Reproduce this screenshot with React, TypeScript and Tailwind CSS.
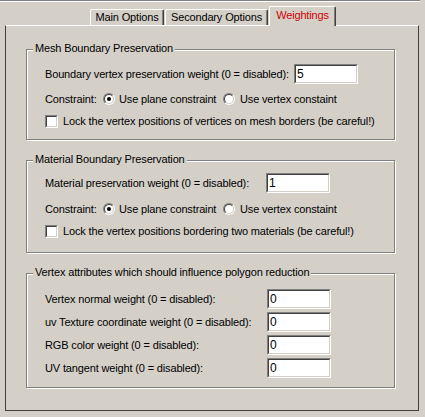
import React from "react";

const font = { fontFamily: '"Liberation Sans", Arial, sans-serif' };

function Radio({ checked }: { checked?: boolean }) {
  return (
    <div className="w-[12px] h-[12px] rounded-full border border-t-[#808080] border-l-[#808080] border-r-white border-b-white shrink-0">
      <div className="w-full h-full rounded-full border border-t-[#404040] border-l-[#404040] border-r-[#d4d0c8] border-b-[#d4d0c8] bg-white flex items-center justify-center">
        {checked && <div className="w-[4px] h-[4px] rounded-full bg-black" />}
      </div>
    </div>
  );
}

function Checkbox() {
  return (
    <div className="w-[13px] h-[13px] border border-t-[#808080] border-l-[#808080] border-r-white border-b-white shrink-0">
      <div className="w-full h-full border border-t-[#404040] border-l-[#404040] border-r-[#d4d0c8] border-b-[#d4d0c8] bg-white" />
    </div>
  );
}

function Input({ value }: { value: string }) {
  return (
    <div className="w-[64px] h-[20px] border border-t-[#808080] border-l-[#808080] border-r-white border-b-white shrink-0">
      <div className="w-full h-full border border-t-[#404040] border-l-[#404040] border-r-[#d4d0c8] border-b-[#d4d0c8] bg-white flex items-center pl-[1px] text-[12px] leading-[14px]">
        {value}
      </div>
    </div>
  );
}

function Group({
  title,
  className,
  children,
}: {
  title: string;
  className: string;
  children: React.ReactNode;
}) {
  return (
    <div
      className={
        "relative w-[369px] border border-[#808080] shadow-[inset_1px_1px_0_#ffffff,1px_1px_0_#ffffff] pl-[18px] " +
        className
      }
    >
      <span className="absolute left-[6px] -top-[8px] px-[2px] bg-[#d4d0c8] leading-[13px]">
        {title}
      </span>
      {children}
    </div>
  );
}

function ConstraintRow({ className }: { className: string }) {
  return (
    <div className={"flex items-center h-[16px] " + className}>
      <span className="w-[58px]">Constraint:</span>
      <div className="flex items-center gap-[4px] w-[120px]">
        <Radio checked />
        <span>Use plane constraint</span>
      </div>
      <div className="flex items-center gap-[5px]">
        <Radio />
        <span>Use vertex constaint</span>
      </div>
    </div>
  );
}

export default function App() {
  return (
    <div
      className="w-[425px] h-[417px] bg-[#d4d0c8] text-black text-[11px] leading-[13px] tracking-[-0.15px] overflow-hidden"
      style={font}
    >
      <div className="w-[420px] h-[2px] border-t border-t-[#808080] border-b border-b-white" />
      <div className="flex items-end h-[23px] pl-[90px]">
        <div className="w-[74px] h-[16px] border-l border-t border-white border-r border-r-[#404040] shadow-[inset_-1px_0_0_#808080] rounded-t-[2px] flex items-center justify-center">
          Main Options
        </div>
        <div className="ml-[1px] w-[103px] h-[16px] border-l border-t border-white border-r border-r-[#404040] shadow-[inset_-1px_0_0_#808080] rounded-t-[2px] flex items-center justify-center">
          Secondary Options
        </div>
        <div className="relative z-10 -mb-px ml-[1px] w-[67px] h-[20px] bg-[#d4d0c8] border-l border-t border-white border-r border-r-[#404040] shadow-[inset_-1px_0_0_#808080] rounded-t-[2px] flex items-center justify-center pb-[2px] text-[#d00000]">
          Weightings
        </div>
      </div>
      <div className="ml-[5px] w-[414px] h-[386px] border-t border-t-white border-l border-r border-b border-l-[#404040] border-r-[#404040] border-b-[#404040] pl-[20px] pt-[23px] flex flex-col">
        <Group title="Mesh Boundary Preservation" className="h-[91px] pt-[14px]">
          <div className="flex items-center h-[20px]">
            <span className="w-[249px]">Boundary vertex preservation weight (0 = disabled):</span>
            <Input value="5" />
          </div>
          <ConstraintRow className="mt-[7px]" />
          <div className="flex items-center h-[16px] mt-[6px] gap-[5px]">
            <Checkbox />
            <span>Lock the vertex positions of vertices on mesh borders (be careful!)</span>
          </div>
        </Group>
        <Group title="Material Boundary Preservation" className="mt-[20px] h-[93px] pt-[12px]">
          <div className="flex items-center h-[20px]">
            <span className="w-[221px]">Material preservation weight (0 = disabled):</span>
            <Input value="1" />
          </div>
          <ConstraintRow className="mt-[8px]" />
          <div className="flex items-center h-[16px] mt-[6px] gap-[5px]">
            <Checkbox />
            <span>Lock the vertex positions bordering two materials (be careful!)</span>
          </div>
        </Group>
        <Group
          title="Vertex attributes which should influence polygon reduction"
          className="mt-[20px] h-[115px] pt-[15px] flex flex-col gap-[3px]"
        >
          {[
            "Vertex normal weight (0 = disabled):",
            "uv Texture coordinate weight (0 = disabled):",
            "RGB color weight (0 = disabled):",
            "UV tangent weight (0 = disabled):",
          ].map((t) => (
            <div key={t} className="flex items-center h-[20px]">
              <span className="w-[222px]">{t}</span>
              <Input value="0" />
            </div>
          ))}
        </Group>
      </div>
    </div>
  );
}
